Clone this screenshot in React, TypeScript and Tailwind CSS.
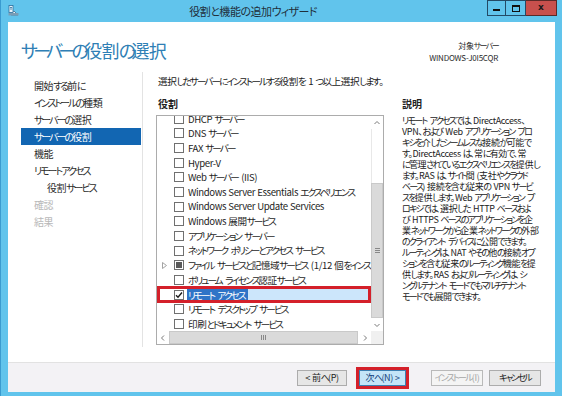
import React from 'react'

const font = "font-['Noto_Sans_CJK_JP','Noto_Sans',sans-serif] [font-feature-settings:'palt']"

const isKana = (s: string) => /[\u3040-\u30ff]/.test(s)

// Meiryo UI has narrow kana; squeeze kana runs so line widths match
function Jp({ text, kana = 'tracking-[-0.2em]' }: { text: string; kana?: string }) {
  const parts = text.split(/([\u3040-\u30ff]+| )/).filter((p) => p !== '')
  return (
    <>
      {parts.map((p, i) =>
        p === ' ' ? (
          <span key={i} className={i > 0 && isKana(parts[i - 1]) ? 'tracking-[0.12em]' : 'tracking-normal'}>
            {' '}
          </span>
        ) : isKana(p) ? (
          <span key={i} className={kana}>
            {p}
          </span>
        ) : (
          <span key={i} className="tracking-[-0.04em]">
            {p}
          </span>
        ),
      )}
    </>
  )
}

const steps = [
  { label: '開始する前に' },
  { label: 'インストールの種類' },
  { label: 'サーバーの選択' },
  { label: 'サーバーの役割', active: true },
  { label: '機能' },
  { label: 'リモート アクセス' },
  { label: '役割サービス', indent: true },
  { label: '確認', disabled: true },
  { label: '結果', disabled: true },
]

const roles = [
  { label: 'DHCP サーバー' },
  { label: 'DNS サーバー' },
  { label: 'FAX サーバー' },
  { label: 'Hyper-V' },
  { label: 'Web サーバー (IIS)' },
  { label: 'Windows Server Essentials エクスペリエンス' },
  { label: 'Windows Server Update Services' },
  { label: 'Windows 展開サービス' },
  { label: 'アプリケーション サーバー' },
  { label: 'ネットワーク ポリシーとアクセス サービス' },
  { label: 'ファイル サービスと記憶域サービス (1/12 個をインストール済み)', partial: true, expand: true },
  { label: 'ボリューム ライセンス認証サービス' },
  { label: 'リモート アクセス', checked: true },
  { label: 'リモート デスクトップ サービス' },
  { label: '印刷とドキュメント サービス' },
]

const description = [
  'リモート アクセスでは、DirectAccess、',
  'VPN、および Web アプリケーション プロ',
  'キシを介したシームレスな接続が可能で',
  'す。DirectAccess は、常に有効で、常',
  'に管理されているエクスペリエンスを提供し',
  'ます。RAS は、サイト間 (支社やクラウド',
  'ベース) 接続を含む従来の VPN サービ',
  'スを提供します。Web アプリケーション プ',
  'ロキシでは、選択した HTTP ベースおよ',
  'び HTTPS ベースのアプリケーションを企',
  '業ネットワークから企業ネットワークの外部',
  'のクライアント デバイスに公開できます。',
  'ルーティングは、NAT やその他の接続オプ',
  'ションを含む従来のルーティング機能を提',
  '供します。RAS およびルーティングは、シ',
  'ングルテナント モードでもマルチテナント',
  'モードでも展開できます。',
]

function Checkbox({ checked, partial }: { checked?: boolean; partial?: boolean }) {
  return (
    <div className="w-[10px] h-[10px] shrink-0 border border-[#707070] bg-white flex items-center justify-center">
      {checked && (
        <svg width="8" height="8" viewBox="0 0 8 8">
          <path d="M1 4.2 L3 6.2 L7 1.5" stroke="#1a1a1a" strokeWidth="1.4" fill="none" />
        </svg>
      )}
      {partial && <div className="w-[6px] h-[6px] bg-[#5a5a5a]" />}
    </div>
  )
}

function Chevron({ dir }: { dir: 'up' | 'down' | 'left' | 'right' }) {
  const d = {
    up: 'M1.5 5 L4 2.5 L6.5 5',
    down: 'M1.5 3 L4 5.5 L6.5 3',
    left: 'M5 1.5 L2.5 4 L5 6.5',
    right: 'M3 1.5 L5.5 4 L3 6.5',
  }[dir]
  return (
    <svg width="8" height="8" viewBox="0 0 8 8">
      <path d={d} stroke="#7a7a7a" strokeWidth="1" fill="none" />
    </svg>
  )
}

function WizardButton({ children, kind }: { children: React.ReactNode; kind?: 'next' | 'disabled' }) {
  const look =
    kind === 'next'
      ? 'bg-[#c4e5f8] border-[#3c7fb1] text-[#123e7a]'
      : kind === 'disabled'
        ? 'bg-[#f4f4f4] border-[#b9b9b9] text-[#a6a6a6]'
        : 'bg-[#e6e6e6] border-[#acacac] text-[#222]'
  return (
    <div className={`h-[16px] border flex items-center justify-center whitespace-pre text-[9px] leading-none ${look}`}>
      {children}
    </div>
  )
}

export default function App() {
  return (
    <div className={`w-[562px] h-[396px] bg-[#61c4ec] border-l border-[#3a9bd0] flex flex-col overflow-hidden ${font}`}>
      {/* Title bar */}
      <div className="h-[22px] flex items-start shrink-0">
        <svg className="ml-[7px] mt-[5px]" width="11" height="11" viewBox="0 0 11 11">
          <rect x="1" y="0.5" width="4" height="7" fill="#e8f4fb" stroke="#2d6e9c" strokeWidth="0.8" />
          <rect x="2" y="2" width="2" height="0.8" fill="#2d6e9c" />
          <rect x="2" y="3.6" width="2" height="0.8" fill="#2d6e9c" />
          <path d="M3 10 L6 6 L10 10 Z" fill="#f4f4f4" stroke="#3a6d8f" strokeWidth="0.8" />
          <rect x="0.5" y="8" width="10" height="2.5" fill="#7a9db5" />
        </svg>
        <div className="flex-1 text-center text-[11px] leading-[22px] text-[#1f2f3a] whitespace-nowrap">
          <Jp text="役割と機能の追加ウィザード" kana="tracking-[-0.06em]" />
        </div>
        <div className="flex mr-[5px]">
          <div className="w-[19px] h-[16px] border border-[#234a66] flex items-end justify-center pb-[4px]">
            <div className="w-[7px] h-[2px] bg-[#111]" />
          </div>
          <div className="w-[20px] h-[16px] border border-l-0 border-[#234a66] flex items-center justify-center">
            <div className="w-[8px] h-[7px] border-[1.5px] border-t-[2.5px] border-[#111]" />
          </div>
          <div className="w-[31px] h-[16px] bg-[#c7504d] border border-l-0 border-[#5a2a28] flex items-center justify-center text-[9px] font-bold text-[#1a1a1a] font-['DejaVu_Sans',sans-serif]">
            x
          </div>
        </div>
      </div>

      {/* Window body */}
      <div className="flex-1 mx-[7px] mb-[4px] bg-white flex flex-col">
        {/* Header */}
        <div className="h-[50px] shrink-0 flex justify-between items-start">
          <div className="pl-[13px] pt-[16px] text-[18px] leading-[24px] text-[#2f7fb5] whitespace-nowrap">
            <Jp text="サーバーの役割の選択" kana="tracking-[-0.26em]" />
          </div>
          <div className="pr-[57px] pt-[18px] text-right text-[8px] leading-[12px] text-[#2a2a2a] whitespace-nowrap">
            <div>
              <Jp text="対象サーバー" />
            </div>
            <div className="tracking-[-0.03em]">WINDOWS-J0I5CQR</div>
          </div>
        </div>

        {/* Main */}
        <div className="flex-1 flex">
          {/* Steps */}
          <div className="w-[135px] shrink-0 border-r border-[#e3e3e3] mb-[15px] pt-[5px] pl-[13px]">
            {steps.map((s) => (
              <div
                key={s.label}
                className={`w-[120px] h-[17px] flex items-center whitespace-nowrap text-[10px] ${s.indent ? 'pl-[26px]' : 'pl-[13px]'} ${
                  s.active ? 'bg-[#1266b2] text-white' : s.disabled ? 'text-[#b8b8b8]' : 'text-[#2b2b2b]'
                }`}
              >
                <Jp text={s.label} />
              </div>
            ))}
          </div>

          {/* Content */}
          <div className="flex-1 pl-[13px] pt-[3px]">
            <div className="pl-[2px] text-[9.6px] leading-[12px] text-[#222] whitespace-nowrap">
              <Jp text="選択したサーバーにインストールする役割を 1 つ以上選択します。" />
            </div>
            <div className="flex gap-[18px] mt-[11px]">
              {/* Roles */}
              <div className="w-[228px] shrink-0">
                <div className="pl-[2px] text-[10px] leading-[12px] font-bold text-[#222]">役割</div>
                <div className="mt-[5px] h-[230px] border border-[#acacac] flex flex-col">
                  <div className="flex-1 flex min-h-0">
                    <div className="flex-1 overflow-hidden">
                      <div className="-mt-[4.6px]">
                        {roles.map((r) => (
                          <div key={r.label} className="relative h-[14.67px] flex items-center whitespace-pre text-[9.6px]">
                            <div className="w-[17px] shrink-0 flex justify-center pr-[2px]">
                              {r.expand && (
                                <svg width="5" height="7" viewBox="0 0 5 7">
                                  <path d="M0.5 0.5 L4.5 3.5 L0.5 6.5 Z" fill="none" stroke="#9a9a9a" strokeWidth="0.9" />
                                </svg>
                              )}
                            </div>
                            <Checkbox checked={r.checked} partial={r.partial} />
                            {r.checked ? (
                              <div className="ml-[3px] flex-1 h-full flex items-center bg-[#cce6fb]">
                                <span className="bg-[#2f74c7] text-white leading-[12px] pl-[1px] pr-[3px]">
                                  <Jp text={r.label} />
                                </span>
                              </div>
                            ) : (
                              <span className="ml-[4px] text-[#1e1e1e]">
                                <Jp text={r.label} />
                              </span>
                            )}
                            {r.checked && (
                              <div className="absolute left-0 right-0 -top-[1px] -bottom-[1px] border-[3px] border-[#d4202a]" />
                            )}
                          </div>
                        ))}
                      </div>
                    </div>
                    {/* Vertical scrollbar */}
                    <div className="w-[12px] shrink-0 flex flex-col bg-[#f0f0f0]">
                      <div className="h-[13px] bg-white flex items-center justify-center">
                        <Chevron dir="up" />
                      </div>
                      <div className="h-[54px] bg-white border-l border-[#e8e8e8]" />
                      <div className="flex-1 bg-[#dadada] border border-[#c9c9c9] flex items-center justify-center">
                        <div className="flex flex-col gap-[1px]">
                          <div className="w-[5px] h-[1px] bg-[#888]" />
                          <div className="w-[5px] h-[1px] bg-[#888]" />
                          <div className="w-[5px] h-[1px] bg-[#888]" />
                        </div>
                      </div>
                      <div className="h-[13px] bg-white flex items-center justify-center">
                        <Chevron dir="down" />
                      </div>
                    </div>
                  </div>
                  {/* Horizontal scrollbar */}
                  <div className="h-[13px] shrink-0 flex">
                    <div className="w-[12px] bg-white flex items-center justify-center">
                      <Chevron dir="left" />
                    </div>
                    <div className="flex-1 bg-[#dadada] border border-[#c9c9c9] flex items-center justify-center">
                      <div className="flex gap-[1px]">
                        <div className="w-[1px] h-[5px] bg-[#888]" />
                        <div className="w-[1px] h-[5px] bg-[#888]" />
                        <div className="w-[1px] h-[5px] bg-[#888]" />
                      </div>
                    </div>
                    <div className="w-[13px] bg-white flex items-center justify-center">
                      <Chevron dir="right" />
                    </div>
                    <div className="w-[12px] bg-[#f0f0f0]" />
                  </div>
                </div>
              </div>

              {/* Description */}
              <div className="flex-1">
                <div className="text-[10px] leading-[12px] font-bold text-[#222]">説明</div>
                <div className="mt-[4.5px] text-[9px] leading-[11px] text-[#222] whitespace-pre">
                  {description.map((line) => (
                    <div key={line}>
                      <Jp text={line} />
                    </div>
                  ))}
                </div>
              </div>
            </div>
          </div>
        </div>

        {/* Footer */}
        <div className="h-[30px] shrink-0 bg-[#f3f2f5] border-t border-[#e2e2e2] flex items-center justify-end pr-[14px]">
          <div className="w-[50px]">
            <WizardButton>
              <Jp text="< 前へ(P)" />
            </WizardButton>
          </div>
          <div className="ml-[9px] w-[53px] border-[3px] border-[#d4202a]">
            <WizardButton kind="next">
              <Jp text="次へ(N) >" />
            </WizardButton>
          </div>
          <div className="ml-[22px] w-[52px]">
            <WizardButton kind="disabled">
              <Jp text="インストール(I)" />
            </WizardButton>
          </div>
          <div className="ml-[6px] w-[52px]">
            <WizardButton>
              <Jp text="キャンセル" />
            </WizardButton>
          </div>
        </div>
      </div>
    </div>
  )
}
